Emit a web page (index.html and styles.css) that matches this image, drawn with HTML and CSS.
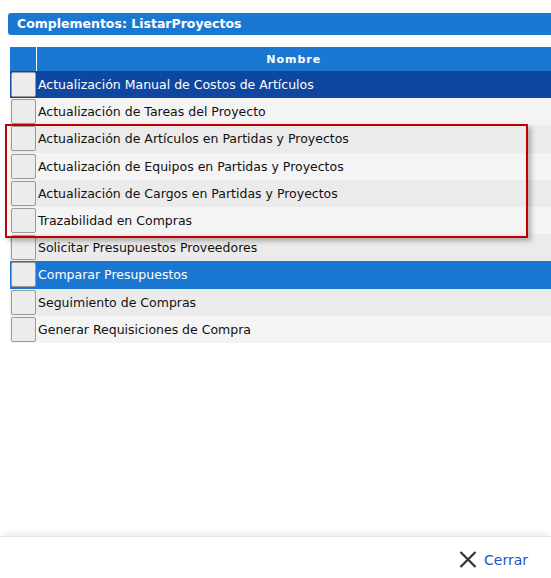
FILE: index.html
```html
<!DOCTYPE html>
<html lang="es">
<head>
  <meta charset="UTF-8" />
  <title>Complementos: ListarProyectos</title>
  <meta name="viewport" content="width=device-width,initial-scale=1" />
  <link rel="stylesheet" href="styles.css">
</head>
<body>
  <div class="dialog">
    <div class="title-bar">Complementos: ListarProyectos</div>

    <div class="grid-wrap">
      <table class="grid">
        <thead>
          <tr>
            <th class="check-col"></th>
            <th>Nombre</th>
          </tr>
        </thead>
        <tbody>
          <tr class="sel-dark"><td class="check-col"><span class="box"></span></td><td>Actualización Manual de Costos de Artículos</td></tr>
          <tr><td class="check-col"><span class="box"></span></td><td>Actualización de Tareas del Proyecto</td></tr>
          <tr><td class="check-col"><span class="box"></span></td><td>Actualización de Artículos en Partidas y Proyectos</td></tr>
          <tr><td class="check-col"><span class="box"></span></td><td>Actualización de Equipos en Partidas y Proyectos</td></tr>
          <tr><td class="check-col"><span class="box"></span></td><td>Actualización de Cargos en Partidas y Proyectos</td></tr>
          <tr><td class="check-col"><span class="box"></span></td><td>Trazabilidad en Compras</td></tr>
          <tr><td class="check-col"><span class="box"></span></td><td>Solicitar Presupuestos Proveedores</td></tr>
          <tr class="sel-light"><td class="check-col"><span class="box"></span></td><td>Comparar Presupuestos</td></tr>
          <tr><td class="check-col"><span class="box"></span></td><td>Seguimiento de Compras</td></tr>
          <tr><td class="check-col"><span class="box"></span></td><td>Generar Requisiciones de Compra</td></tr>
        </tbody>
      </table>
      <!-- highlight frame drawn over rows 3-6 -->
      <div class="highlight"></div>
    </div>

    <div class="footer">
      <a class="close-btn" href="#">
        <svg width="18" height="17" viewBox="0 0 18 17" aria-hidden="true">
          <path d="M1.5 1 L16.5 16 M16.5 1 L1.5 16" stroke="#333" stroke-width="2.2" fill="none" />
        </svg>
        Cerrar
      </a>
    </div>
  </div>
</body>
</html>
```

FILE: styles.css
```css
:root {
  --blue: #1b78d2;
  --blue-dark: #0f47a0;
  --row-a: #ebebeb;
  --row-b: #f4f4f4;
}
html, body {
  margin: 0;
  height: 100%;
  background: #fff;
}
body {
  font-family: "DejaVu Sans", Verdana, sans-serif;
  overflow: hidden;
}
.dialog {
  height: 578px;
  display: flex;
  flex-direction: column;
}
.title-bar {
  margin: 13px 0 0 8px;
  height: 22px;
  line-height: 22px;
  padding-left: 9px;
  background: var(--blue);
  color: #fff;
  font-weight: 700;
  font-size: 12.5px;
  border-radius: 3px 0 0 3px;
}
.grid-wrap {
  position: relative;
  margin-top: 12px;
}
.grid {
  margin-left: 10px;
  width: 541px;
  border-collapse: collapse;
  font-size: 12.5px;
}
.grid th {
  background: var(--blue);
  color: #fff;
  height: 24px;
  padding: 0;
  font-size: 11px;
  font-weight: 700;
  letter-spacing: 1px;
  text-align: center;
}
.grid th.check-col {
  border-right: 1px solid #fff;
}
.grid td {
  height: 27.2px;
  padding: 0 0 0 2px;
  color: #111;
  white-space: nowrap;
}
.grid td.check-col {
  width: 24px;
  padding: 0 0 0 1px;
}
.grid tbody tr:nth-child(odd) { background: var(--row-a); }
.grid tbody tr:nth-child(even) { background: var(--row-b); }
.grid tbody tr.sel-dark { background: var(--blue-dark); }
.grid tbody tr.sel-light { background: var(--blue); }
.grid tr.sel-dark td,
.grid tr.sel-light td {
  color: #fff;
}
.box {
  display: block;
  width: 23px;
  height: 23px;
  background: #ececec;
  border: 1px solid #9a9a9a;
  border-radius: 2px;
}
.highlight {
  position: absolute;
  left: 5px;
  top: 77px;
  width: 519px;
  height: 110px;
  border: 2px solid #c00000;
  box-shadow: 3px 3px 5px rgba(0, 0, 0, 0.28);
  pointer-events: none;
}
.footer {
  margin-top: auto;
  height: 41px;
  border-top: 1px solid #e2e2e2;
  box-shadow: 0 -5px 6px -3px rgba(0, 0, 0, 0.1);
  display: flex;
  justify-content: flex-end;
  align-items: center;
  padding-right: 23px;
}
.close-btn {
  display: flex;
  align-items: center;
  gap: 7px;
  color: #1a56c6;
  text-decoration: none;
  font-size: 14px;
  margin-top: 4px;
}
```
